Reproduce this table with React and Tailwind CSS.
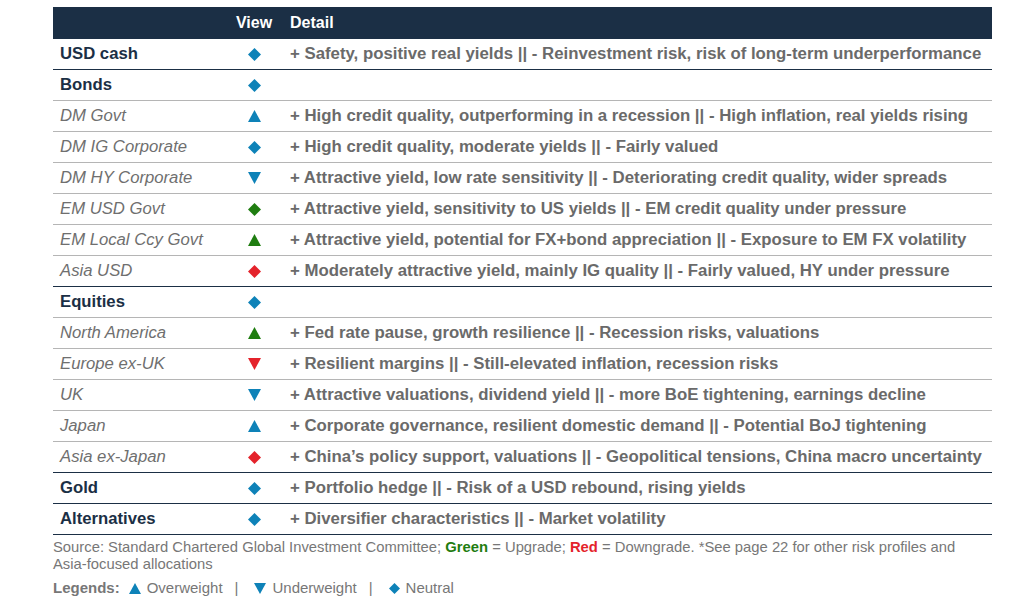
import React from 'react';

const BLUE = '#0e82b8';
const GREEN = '#1f7d10';
const RED = '#e4232b';

// Icono de vista: diamante, triangulo arriba o abajo
const Mark = ({ type, color = BLUE, size = 13 }) => {
    if (type === 'up') {
        return (
            <svg width={size} height={size - 1} viewBox="0 0 12 11"><polygon points="6,0 12,11 0,11" fill={color} /></svg>
        );
    }
    if (type === 'down') {
        return (
            <svg width={size} height={size - 1} viewBox="0 0 12 11"><polygon points="0,0 12,0 6,11" fill={color} /></svg>
        );
    }
    return (
        <svg width={size} height={size} viewBox="0 0 12 12"><polygon points="6,0 12,6 6,12 0,6" fill={color} /></svg>
    );
};

const rows = [
    { label: 'USD cash', head: true, mark: 'diamond', detail: '+ Safety, positive real yields || - Reinvestment risk, risk of long-term underperformance', line: 'dark' },
    { label: 'Bonds', head: true, mark: 'diamond', detail: '' },
    { label: 'DM Govt', mark: 'up', detail: '+ High credit quality, outperforming in a recession || - High inflation, real yields rising' },
    { label: 'DM IG Corporate', mark: 'diamond', detail: '+ High credit quality, moderate yields || - Fairly valued' },
    { label: 'DM HY Corporate', mark: 'down', detail: '+ Attractive yield, low rate sensitivity || - Deteriorating credit quality, wider spreads' },
    { label: 'EM USD Govt', mark: 'diamond', color: GREEN, detail: '+ Attractive yield, sensitivity to US yields || - EM credit quality under pressure' },
    { label: 'EM Local Ccy Govt', mark: 'up', color: GREEN, detail: '+ Attractive yield, potential for FX+bond appreciation || - Exposure to EM FX volatility' },
    { label: 'Asia USD', mark: 'diamond', color: RED, detail: '+ Moderately attractive yield, mainly IG quality || - Fairly valued, HY under pressure', line: 'dark' },
    { label: 'Equities', head: true, mark: 'diamond', detail: '' },
    { label: 'North America', mark: 'up', color: GREEN, detail: '+ Fed rate pause, growth resilience || - Recession risks, valuations' },
    { label: 'Europe ex-UK', mark: 'down', color: RED, detail: '+ Resilient margins || - Still-elevated inflation, recession risks' },
    { label: 'UK', mark: 'down', detail: '+ Attractive valuations, dividend yield || - more BoE tightening, earnings decline' },
    { label: 'Japan', mark: 'up', detail: '+ Corporate governance, resilient domestic demand || - Potential BoJ tightening' },
    { label: 'Asia ex-Japan', mark: 'diamond', color: RED, detail: '+ China\u2019s policy support, valuations || - Geopolitical tensions, China macro uncertainty', line: 'dark' },
    { label: 'Gold', head: true, mark: 'diamond', detail: '+ Portfolio hedge || - Risk of a USD rebound, rising yields', line: 'dark' },
    { label: 'Alternatives', head: true, mark: 'diamond', detail: '+ Diversifier characteristics || - Market volatility', line: 'dark' },
];

export default function App() {
    return (
        <div className="w-[1036px] h-[600px] bg-white pt-[7px] pl-[53px] font-['Liberation_Sans',Arial,sans-serif]">
            <div className="w-[939px]">
                {/* Cabecera */}
                <div className="flex items-center h-[32px] bg-[#1b2f45] text-white font-bold text-[16px]">
                    <div className="w-[177px] pl-[7px]"></div>
                    <div className="w-[48px] text-center">View</div>
                    <div className="pl-[12px]">Detail</div>
                </div>

                {rows.map((r) => (
                    <div key={r.label}
                         className={`flex items-center h-[31px] ${r.line === 'dark' ? 'border-b-[1.5px] border-[#1b2f45]' : 'border-b-[1.5px] border-[#b5b5b5]'}`}>
                        <div className={`w-[177px] pl-[7px] text-[16.7px] ${r.head ? 'font-bold text-[#1b2f45]' : 'italic text-[#6f6f6f]'}`}>{r.label}</div>
                        <div className="w-[48px] flex justify-center"><Mark type={r.mark} color={r.color || BLUE} /></div>
                        <div className="pl-[12px] text-[16.8px] font-bold text-[#6a6a6a] whitespace-nowrap">{r.detail}</div>
                    </div>
                ))}

                {/* Notas */}
                <div className="pt-[4px] text-[14.8px] leading-[17px] text-[#777777]">
                    Source: Standard Chartered Global Investment Committee; <span className="font-bold text-[#1f7d10]">Green</span> = Upgrade; <span className="font-bold text-[#e4232b]">Red</span> = Downgrade. *See page 22 for other risk profiles and<br />
                    Asia-focused allocations
                </div>
                <div className="flex items-center mt-[4px] text-[15px] text-[#777777]">
                    <span className="font-bold">Legends:</span>
                    <span className="ml-[9px] mr-[6px]"><Mark type="up" size={12} /></span>
                    <span>Overweight</span>
                    <span className="mx-[12px]">|</span>
                    <span className="ml-[4px] mr-[6px]"><Mark type="down" size={12} /></span>
                    <span>Underweight</span>
                    <span className="mx-[12px]">|</span>
                    <span className="ml-[4px] mr-[6px]"><Mark type="diamond" size={11} /></span>
                    <span>Neutral</span>
                </div>
            </div>
        </div>
    );
}
